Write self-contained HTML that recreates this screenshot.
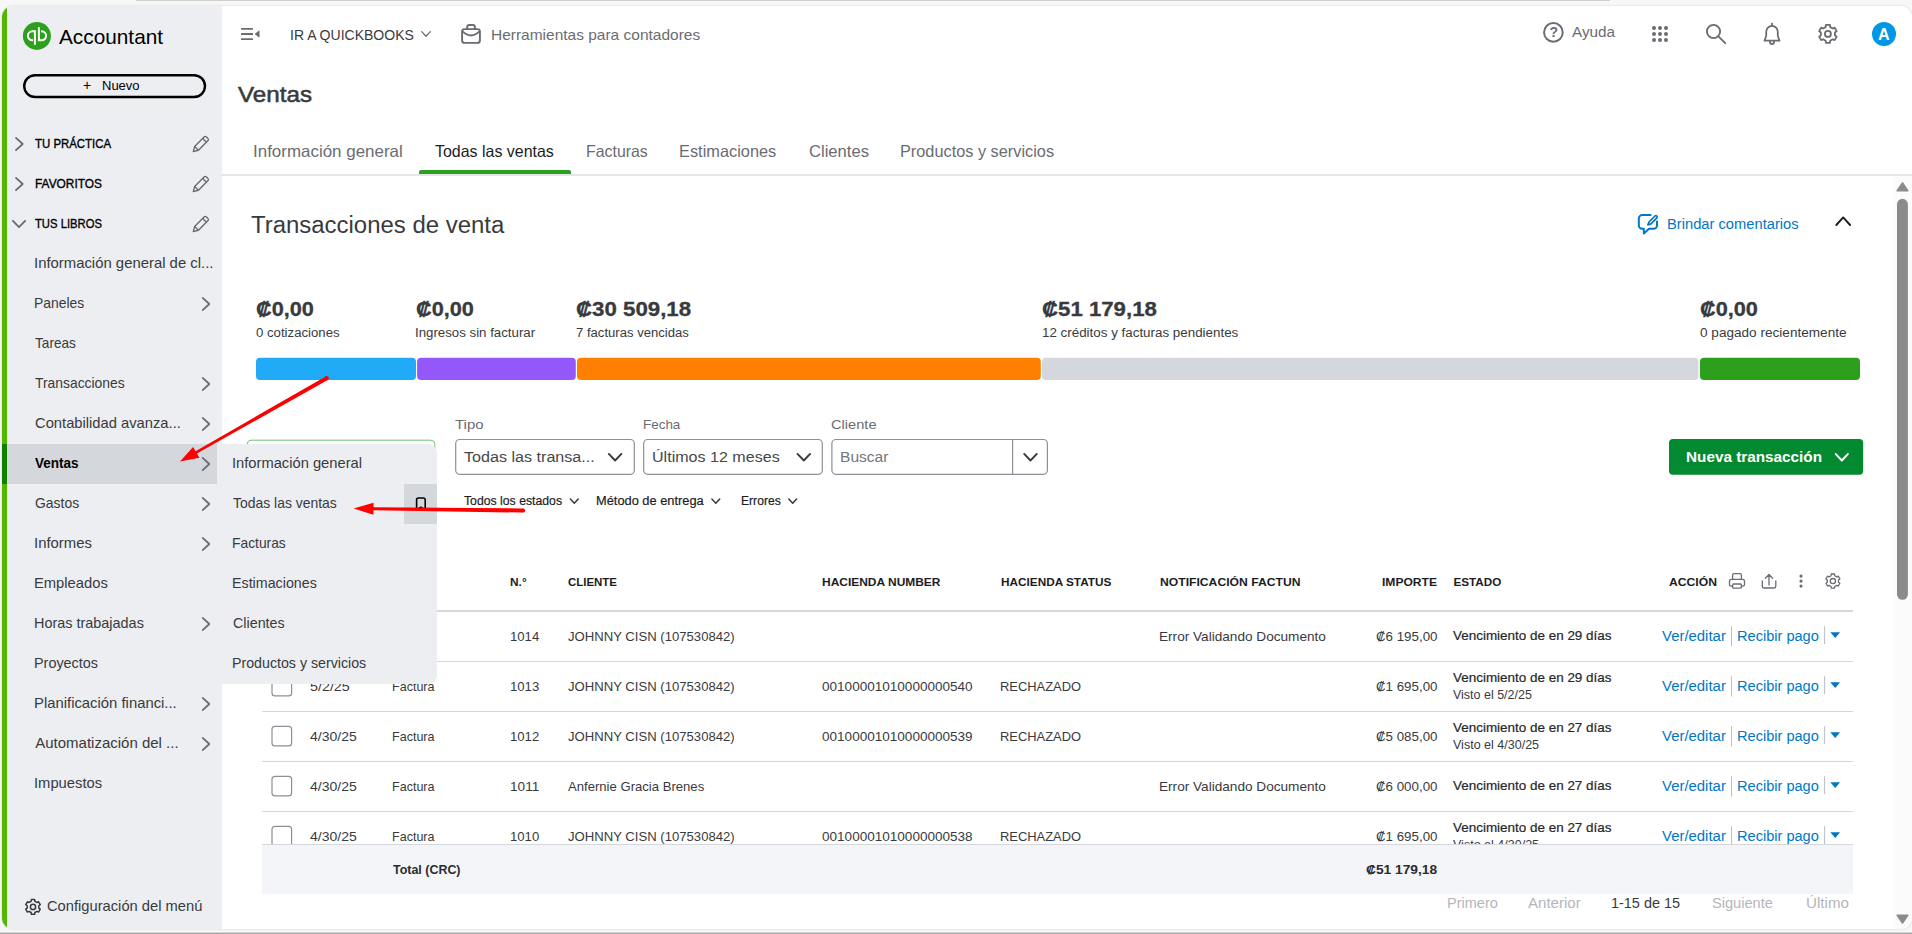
<!DOCTYPE html>
<html lang="es">
<head>
<meta charset="utf-8">
<title>Ventas</title>
<style>
*{box-sizing:border-box;margin:0;padding:0}
html,body{width:1912px;height:934px;overflow:hidden}
body{background:#f7f7f7;font-family:"Liberation Sans",sans-serif;color:#393a3d;position:relative}
.abs{position:absolute}
.t{position:absolute;white-space:nowrap;line-height:20px;height:20px;transform-origin:0 50%}
svg{position:absolute;overflow:visible}
#topline{left:136px;top:0;width:1474px;height:1px;background:#cfcfcf}
#bottomline{left:0;top:932px;width:1912px;height:2px;background:linear-gradient(#d6d6d6 0,#d6d6d6 40%,#a6a6a6 40%)}
#win{left:2px;top:6px;width:1910px;height:923px;background:#fff;border-radius:11px;overflow:hidden;box-shadow:0 0 2px rgba(0,0,0,.18)}
/* coordinates inside #win are offset by (-2,-6); use an inner wrapper to restore page coords */
#pg{position:absolute;left:-2px;top:-6px;width:1912px;height:934px}
#greenbar{left:2px;top:6px;width:5px;height:923px;background:#53b700}
#side{left:7px;top:6px;width:215px;height:923px;background:#eceef1}
#selrow{left:2px;top:444px;width:215px;height:40px;background:#d4d7dc}
#selgreen{left:2px;top:444px;width:5px;height:40px;background:#108000}
#fly{left:217px;top:444px;width:220px;height:240px;background:#eceef1;border-radius:0 9px 9px 0}
#bm{left:404px;top:484px;width:33px;height:40px;background:#d4d7dc}
</style>
</head>
<body>
<div class="abs" id="topline"></div>
<div class="abs" id="bottomline"></div>
<div class="abs" id="win"><div id="pg">

<!-- ============ SIDEBAR ============ -->
<aside>
<div class="abs" id="greenbar"></div>
<div class="abs" id="side"></div>
<nav>
<div class="abs" id="selrow"></div><div class="abs" id="selgreen"></div>
<svg width="1912" height="934" style="left:0;top:0"><circle cx="36.9" cy="35.9" r="14" fill="#2ca01c"/><path d="M33 40.3 H32.4 A4.5 4.5 0 0 1 32.4 31.3 H34.9 V44.7" fill="none" stroke="#fff" stroke-width="2"/><path d="M41 31.3 H41.6 A4.5 4.5 0 0 1 41.6 40.3 H38.9 V27.3" fill="none" stroke="#fff" stroke-width="2"/><rect x="24.2" y="75.2" width="180.8" height="21.8" rx="10.9" fill="none" stroke="#000" stroke-width="2.4"/><path d="M16.0 137.9 L22.7 144.0 L16.0 150.1" fill="none" stroke="#6b6c72" stroke-width="1.8" stroke-linecap="round" stroke-linejoin="round"/><path d="M16.0 177.9 L22.7 184.0 L16.0 190.1" fill="none" stroke="#6b6c72" stroke-width="1.8" stroke-linecap="round" stroke-linejoin="round"/><path d="M12.9 220.8 L19.0 227.2 L25.1 220.8" fill="none" stroke="#6b6c72" stroke-width="1.8" stroke-linecap="round" stroke-linejoin="round"/><path d="M193.30 151.60 L194.68 146.47 L204.30 136.86 A1.4 1.4 0 0 1 206.28 136.86 L208.04 138.62 A1.4 1.4 0 0 1 208.04 140.60 L198.43 150.22 Z M194.68 146.47 L198.43 150.22 M202.67 138.48 L206.42 142.23" fill="none" stroke="#6b6c72" stroke-width="1.4" stroke-linejoin="round" stroke-linecap="round"/><path d="M193.30 191.60 L194.68 186.47 L204.30 176.86 A1.4 1.4 0 0 1 206.28 176.86 L208.04 178.62 A1.4 1.4 0 0 1 208.04 180.60 L198.43 190.22 Z M194.68 186.47 L198.43 190.22 M202.67 178.48 L206.42 182.23" fill="none" stroke="#6b6c72" stroke-width="1.4" stroke-linejoin="round" stroke-linecap="round"/><path d="M193.30 231.60 L194.68 226.47 L204.30 216.86 A1.4 1.4 0 0 1 206.28 216.86 L208.04 218.62 A1.4 1.4 0 0 1 208.04 220.60 L198.43 230.22 Z M194.68 226.47 L198.43 230.22 M202.67 218.48 L206.42 222.23" fill="none" stroke="#6b6c72" stroke-width="1.4" stroke-linejoin="round" stroke-linecap="round"/><path d="M202.7 297.9 L209.3 304.0 L202.7 310.1" fill="none" stroke="#6b6c72" stroke-width="1.8" stroke-linecap="round" stroke-linejoin="round"/><path d="M202.7 377.9 L209.3 384.0 L202.7 390.1" fill="none" stroke="#6b6c72" stroke-width="1.8" stroke-linecap="round" stroke-linejoin="round"/><path d="M202.7 417.9 L209.3 424.0 L202.7 430.1" fill="none" stroke="#6b6c72" stroke-width="1.8" stroke-linecap="round" stroke-linejoin="round"/><path d="M202.7 457.9 L209.3 464.0 L202.7 470.1" fill="none" stroke="#6b6c72" stroke-width="1.8" stroke-linecap="round" stroke-linejoin="round"/><path d="M202.7 497.9 L209.3 504.0 L202.7 510.1" fill="none" stroke="#6b6c72" stroke-width="1.8" stroke-linecap="round" stroke-linejoin="round"/><path d="M202.7 537.9 L209.3 544.0 L202.7 550.1" fill="none" stroke="#6b6c72" stroke-width="1.8" stroke-linecap="round" stroke-linejoin="round"/><path d="M202.7 617.9 L209.3 624.0 L202.7 630.1" fill="none" stroke="#6b6c72" stroke-width="1.8" stroke-linecap="round" stroke-linejoin="round"/><path d="M202.7 697.9 L209.3 704.0 L202.7 710.1" fill="none" stroke="#6b6c72" stroke-width="1.8" stroke-linecap="round" stroke-linejoin="round"/><path d="M202.7 737.9 L209.3 744.0 L202.7 750.1" fill="none" stroke="#6b6c72" stroke-width="1.8" stroke-linecap="round" stroke-linejoin="round"/><path d="M31.34 899.48 L34.66 899.48 L34.89 901.28 L36.92 902.45 L38.59 901.76 L40.25 904.63 L38.81 905.73 L38.81 908.07 L40.25 909.17 L38.59 912.04 L36.92 911.35 L34.89 912.52 L34.66 914.32 L31.34 914.32 L31.11 912.52 L29.08 911.35 L27.41 912.04 L25.75 909.17 L27.19 908.07 L27.19 905.73 L25.75 904.63 L27.41 901.76 L29.08 902.45 L31.11 901.28 Z" fill="none" stroke="#393a3d" stroke-width="1.5" stroke-linejoin="round"/><circle cx="33" cy="906.9" r="2.6" fill="none" stroke="#393a3d" stroke-width="1.5"/></svg>
<span class="t" style="left:59.40px;top:26.50px;font-size:21px;color:#000;transform:scaleX(0.9901);">Accountant</span>
<span class="t" style="left:83.00px;top:75.31px;font-size:14px;color:#000;">+</span>
<span class="t" style="left:102.00px;top:76.00px;font-size:13px;color:#000;">Nuevo</span>
<span class="t" style="left:35.00px;top:134.10px;font-size:13px;color:#000;transform:scaleX(0.8782);-webkit-text-stroke:.35px #000;">TU PRÁCTICA</span>
<span class="t" style="left:34.58px;top:174.10px;font-size:13px;color:#000;transform:scaleX(0.9155);-webkit-text-stroke:.35px #000;">FAVORITOS</span>
<span class="t" style="left:35.00px;top:214.10px;font-size:13px;color:#000;transform:scaleX(0.8657);-webkit-text-stroke:.35px #000;">TUS LIBROS</span>
<span class="t" style="left:34.21px;top:253.11px;font-size:15px;transform:scaleX(0.9918);">Información general de cl...</span>
<span class="t" style="left:34.27px;top:293.11px;font-size:15px;transform:scaleX(0.9259);">Paneles</span>
<span class="t" style="left:35.20px;top:333.11px;font-size:15px;transform:scaleX(0.9074);">Tareas</span>
<span class="t" style="left:35.20px;top:373.11px;font-size:15px;transform:scaleX(0.9245);">Transacciones</span>
<span class="t" style="left:35.20px;top:413.11px;font-size:15px;transform:scaleX(0.9826);">Contabilidad avanza...</span>
<span class="t" style="left:35.20px;top:453.11px;font-size:15px;font-weight:700;color:#000;transform:scaleX(0.8996);">Ventas</span>
<span class="t" style="left:35.20px;top:493.11px;font-size:15px;transform:scaleX(0.9294);">Gastos</span>
<span class="t" style="left:34.21px;top:533.11px;font-size:15px;transform:scaleX(0.9920);">Informes</span>
<span class="t" style="left:34.22px;top:573.11px;font-size:15px;transform:scaleX(0.9831);">Empleados</span>
<span class="t" style="left:34.24px;top:613.11px;font-size:15px;transform:scaleX(0.9616);">Horas trabajadas</span>
<span class="t" style="left:34.24px;top:653.11px;font-size:15px;transform:scaleX(0.9587);">Proyectos</span>
<span class="t" style="left:34.21px;top:693.11px;font-size:15px;transform:scaleX(0.9896);">Planificación financi...</span>
<span class="t" style="left:35.20px;top:733.11px;font-size:15px;">Automatización del ...</span>
<span class="t" style="left:34.22px;top:773.11px;font-size:15px;transform:scaleX(0.9838);">Impuestos</span>
<span class="t" style="left:47.00px;top:896.20px;font-size:15px;transform:scaleX(0.9805);">Configuración del menú</span>
</nav>
</aside>

<!-- ============ TOPBAR ============ -->
<header>
<svg width="1912" height="934" style="left:0;top:0"><rect x="241" y="27.95" width="12" height="1.9" rx=".5" fill="#6b6c72"/><rect x="241" y="33.05" width="12" height="1.9" rx=".5" fill="#6b6c72"/><rect x="241" y="38.15" width="12" height="1.9" rx=".5" fill="#6b6c72"/><path d="M255 34 L259.2 30.8 V37.2 Z" fill="#6b6c72" stroke="#6b6c72" stroke-width=".6" stroke-linejoin="round"/><path d="M421.7 31.6 L426.0 36.2 L430.3 31.6" fill="none" stroke="#6b6c72" stroke-width="1.3" stroke-linecap="round" stroke-linejoin="round"/><g fill="none" stroke="#6b6c72" stroke-width="1.9" stroke-linejoin="round" stroke-linecap="round"><rect x="462.1" y="29.1" width="17.8" height="13.8" rx="2.4"/><path d="M467.2 28.6 V27 a2 2 0 0 1 2 -2 h3.7 a2 2 0 0 1 2 2 V28.6"/><path d="M462.6 31.4 Q471 39.6 479.4 31.4" stroke-width="1.7"/></g><circle cx="1553.4" cy="32.4" r="9.35" fill="none" stroke="#6b6c72" stroke-width="1.95"/><circle cx="1654" cy="28" r="2" fill="#6b6c72"/><circle cx="1654" cy="34" r="2" fill="#6b6c72"/><circle cx="1654" cy="40" r="2" fill="#6b6c72"/><circle cx="1660" cy="28" r="2" fill="#6b6c72"/><circle cx="1660" cy="34" r="2" fill="#6b6c72"/><circle cx="1660" cy="40" r="2" fill="#6b6c72"/><circle cx="1666" cy="28" r="2" fill="#6b6c72"/><circle cx="1666" cy="34" r="2" fill="#6b6c72"/><circle cx="1666" cy="40" r="2" fill="#6b6c72"/><circle cx="1713.5" cy="31.5" r="6.6" fill="none" stroke="#6b6c72" stroke-width="1.9"/><path d="M1718.4 36.4 L1725.2 43.2" stroke="#6b6c72" stroke-width="1.9" stroke-linecap="round"/><g fill="none" stroke="#6b6c72" stroke-width="1.8" stroke-linejoin="round" stroke-linecap="round"><path d="M1772 23.6 V25.6"/><path d="M1764.5 40.7 L1766.2 36 V32 A5.8 6.2 0 0 1 1777.8 32 V36 L1779.5 40.7 Z"/><path d="M1769.9 41.6 A2.1 2.6 0 0 0 1774.1 41.6"/></g><path d="M1825.89 24.92 L1829.91 24.92 L1830.19 27.10 L1832.65 28.52 L1834.67 27.67 L1836.68 31.15 L1834.93 32.48 L1834.93 35.32 L1836.68 36.65 L1834.67 40.13 L1832.65 39.28 L1830.19 40.70 L1829.91 42.88 L1825.89 42.88 L1825.61 40.70 L1823.15 39.28 L1821.13 40.13 L1819.12 36.65 L1820.87 35.32 L1820.87 32.48 L1819.12 31.15 L1821.13 27.67 L1823.15 28.52 L1825.61 27.10 Z" fill="none" stroke="#6b6c72" stroke-width="1.8" stroke-linejoin="round"/><circle cx="1827.9" cy="33.9" r="3.0" fill="none" stroke="#6b6c72" stroke-width="1.8"/><circle cx="1884" cy="33.9" r="12" fill="#0097e6"/><rect x="222" y="174" width="1690" height="2" fill="#e3e5e8"/><path d="M419 174 V172 a2 2 0 0 1 2 -2 H569 a2 2 0 0 1 2 2 V174 Z" fill="#2ca01c"/></svg>
<span class="t" style="left:289.53px;top:25.01px;font-size:14.5px;transform:scaleX(0.9668);">IR A QUICKBOOKS</span>
<span class="t" style="left:490.57px;top:24.81px;font-size:15px;color:#6b6c72;transform:scaleX(1.0323);">Herramientas para contadores</span>
<span class="t" style="left:1549.60px;top:22.40px;font-size:14px;font-weight:700;color:#6b6c72;">?</span>
<span class="t" style="left:1571.80px;top:21.81px;font-size:15.5px;color:#6b6c72;transform:scaleX(0.9853);">Ayuda</span>
<span class="t" style="left:1877.90px;top:24.90px;font-size:16px;font-weight:700;color:#fff;transform:scaleX(1.0083);">A</span>
<span class="t" style="left:238.40px;top:84.40px;font-size:22.8px;transform:scaleX(1.0618);-webkit-text-stroke:.55px #393a3d;">Ventas</span>
<span class="t" style="left:252.97px;top:140.91px;font-size:16.5px;color:#6b6c72;transform:scaleX(1.0266);">Información general</span>
<span class="t" style="left:435.30px;top:140.91px;font-size:16.5px;color:#1d1d1f;transform:scaleX(0.9669);">Todas las ventas</span>
<span class="t" style="left:586.24px;top:140.91px;font-size:16.5px;color:#6b6c72;transform:scaleX(0.9629);">Facturas</span>
<span class="t" style="left:679.41px;top:140.91px;font-size:16.5px;color:#6b6c72;transform:scaleX(0.9910);">Estimaciones</span>
<span class="t" style="left:809.30px;top:140.91px;font-size:16.5px;color:#6b6c72;transform:scaleX(1.0057);">Clientes</span>
<span class="t" style="left:900.41px;top:140.91px;font-size:16.5px;color:#6b6c72;transform:scaleX(0.9881);">Productos y servicios</span>
</header>

<!-- ============ MAIN ============ -->
<main>
<svg width="1912" height="934" style="left:0;top:0"><rect x="1893" y="176" width="19" height="753" fill="#fbfbfb"/><path d="M1897.2 190.8 L1902.5 183 L1907.8 190.8 Z" fill="#8b8b8b" stroke="#8b8b8b" stroke-width="1.6" stroke-linejoin="round"/><path d="M1897.2 915.2 L1902.5 923 L1907.8 915.2 Z" fill="#8b8b8b" stroke="#8b8b8b" stroke-width="1.6" stroke-linejoin="round"/><rect x="1897" y="198.8" width="10.9" height="401" rx="5.45" fill="#8b8b8b"/><g fill="none" stroke="#0077c5" stroke-width="2" stroke-linecap="round" stroke-linejoin="round"><path d="M1650.6 215.1 H1642.3 a3.5 3.5 0 0 0 -3.5 3.5 V225.2 a3.5 3.5 0 0 0 3.5 3.5 H1643.8 V233.4 L1649 228.7 H1653.5 a3.5 3.5 0 0 0 3.5 -3.5 V221.4"/><path d="M1647.9 224.9 L1649 222 L1655 216 A1.35 1.35 0 0 1 1656.9 217.9 L1650.9 223.9 Z" stroke-width="1.7"/></g><path d="M1836.3 225 L1843.2 217.4 L1850.1 225" fill="none" stroke="#1d1d1f" stroke-width="1.9" stroke-linecap="round" stroke-linejoin="round"/><rect x="256" y="357.8" width="160.0" height="22.2" rx="4" fill="#21abf6"/><rect x="417.1" y="357.8" width="158.7" height="22.2" rx="4" fill="#9457fa"/><rect x="577" y="357.8" width="463.8" height="22.2" rx="4" fill="#ff8000"/><rect x="1042" y="357.8" width="656.4" height="22.2" rx="4" fill="#d4d7dc"/><rect x="1700" y="357.8" width="160.0" height="22.2" rx="4" fill="#2ca01c"/><rect x="247.2" y="440.2" width="187.6" height="35" rx="4" fill="#fff" stroke="#6cc17c" stroke-width="1"/><rect x="455.70000000000005" y="439.5" width="178.6" height="34.8" rx="4" fill="#fff" stroke="#8d9096" stroke-width="1.2"/><rect x="643.7" y="439.5" width="178.6" height="34.8" rx="4" fill="#fff" stroke="#8d9096" stroke-width="1.2"/><rect x="831.9" y="439.5" width="215.5" height="34.8" rx="4" fill="#fff" stroke="#8d9096" stroke-width="1.2"/><path d="M1012.6 439.5 V474.3" stroke="#8d9096" stroke-width="1.2"/><path d="M608.8 453.9 L615.1 460.5 L621.4 453.9" fill="none" stroke="#393a3d" stroke-width="1.9" stroke-linecap="round" stroke-linejoin="round"/><path d="M797.5 453.9 L803.8 460.5 L810.1 453.9" fill="none" stroke="#393a3d" stroke-width="1.9" stroke-linecap="round" stroke-linejoin="round"/><path d="M1024.2 453.9 L1030.5 460.5 L1036.8 453.9" fill="none" stroke="#393a3d" stroke-width="1.9" stroke-linecap="round" stroke-linejoin="round"/><path d="M570.4 499.1 L574.3 503.3 L578.2 499.1" fill="none" stroke="#393a3d" stroke-width="1.5" stroke-linecap="round" stroke-linejoin="round"/><path d="M711.9 499.1 L715.8 503.3 L719.7 499.1" fill="none" stroke="#393a3d" stroke-width="1.5" stroke-linecap="round" stroke-linejoin="round"/><path d="M788.8 499.1 L792.7 503.3 L796.6 499.1" fill="none" stroke="#393a3d" stroke-width="1.5" stroke-linecap="round" stroke-linejoin="round"/><rect x="1669" y="439" width="194.2" height="35.8" rx="4" fill="#038a30"/><path d="M1835.8 454.1 L1841.8 460.5 L1847.8 454.1" fill="none" stroke="#fff" stroke-width="2" stroke-linecap="round" stroke-linejoin="round"/><g fill="none" stroke="#6b6c72" stroke-width="1.3" stroke-linejoin="round" stroke-linecap="round"><path d="M1732.6 579.4 V575 a1.4 1.4 0 0 1 1.4 -1.4 h6 a1.4 1.4 0 0 1 1.4 1.4 V579.4"/><path d="M1732.6 586.2 H1731.3 a1.8 1.8 0 0 1 -1.8 -1.8 V581.2 a1.8 1.8 0 0 1 1.8 -1.8 H1742.7 a1.8 1.8 0 0 1 1.8 1.8 V584.4 a1.8 1.8 0 0 1 -1.8 1.8 H1741.4"/><rect x="1732.6" y="584" width="8.8" height="4.2" rx="1"/><path d="M1762.3 581 V586.2 a1.8 1.8 0 0 0 1.8 1.8 H1774 a1.8 1.8 0 0 0 1.8 -1.8 V581"/><path d="M1769 585 V574.6 M1765.4 578.2 L1769 574.5 L1772.6 578.2"/></g><circle cx="1801" cy="576.1" r="1.55" fill="#6b6c72"/><circle cx="1801" cy="581.1" r="1.55" fill="#6b6c72"/><circle cx="1801" cy="586.1" r="1.55" fill="#6b6c72"/><path d="M1831.31 573.98 L1834.49 573.98 L1834.72 575.70 L1836.67 576.83 L1838.27 576.16 L1839.87 578.92 L1838.48 579.97 L1838.48 582.23 L1839.87 583.28 L1838.27 586.04 L1836.67 585.37 L1834.72 586.50 L1834.49 588.22 L1831.31 588.22 L1831.08 586.50 L1829.13 585.37 L1827.53 586.04 L1825.93 583.28 L1827.32 582.23 L1827.32 579.97 L1825.93 578.92 L1827.53 576.16 L1829.13 576.83 L1831.08 575.70 Z" fill="none" stroke="#6b6c72" stroke-width="1.3" stroke-linejoin="round"/><circle cx="1832.9" cy="581.1" r="2.6" fill="none" stroke="#6b6c72" stroke-width="1.3"/><rect x="262" y="610" width="1591" height="2" fill="#d4d7dc"/><rect x="262" y="661" width="1591" height="1" fill="#d4d7dc"/><rect x="262" y="711" width="1591" height="1" fill="#d4d7dc"/><rect x="262" y="761" width="1591" height="1" fill="#d4d7dc"/><rect x="262" y="811" width="1591" height="1" fill="#d4d7dc"/><rect x="272" y="626.3" width="19.6" height="19.6" rx="3" fill="#fff" stroke="#8d9096" stroke-width="1.2"/><rect x="272" y="676.3" width="19.6" height="19.6" rx="3" fill="#fff" stroke="#8d9096" stroke-width="1.2"/><rect x="272" y="726.3" width="19.6" height="19.6" rx="3" fill="#fff" stroke="#8d9096" stroke-width="1.2"/><rect x="272" y="776.3" width="19.6" height="19.6" rx="3" fill="#fff" stroke="#8d9096" stroke-width="1.2"/><rect x="272" y="826.3" width="19.6" height="19.6" rx="3" fill="#fff" stroke="#8d9096" stroke-width="1.2"/><path d="M1731.5 626.3 V646.5 M1824.6 626.3 V644" stroke="#babec5" stroke-width="1"/><path d="M1830.3 632.3 H1840.1 L1835.2 638.1 Z" fill="#0077c5"/><path d="M1731.5 676.3 V696.5 M1824.6 676.3 V694" stroke="#babec5" stroke-width="1"/><path d="M1830.3 682.3 H1840.1 L1835.2 688.1 Z" fill="#0077c5"/><path d="M1731.5 726.3 V746.5 M1824.6 726.3 V744" stroke="#babec5" stroke-width="1"/><path d="M1830.3 732.3 H1840.1 L1835.2 738.1 Z" fill="#0077c5"/><path d="M1731.5 776.3 V796.5 M1824.6 776.3 V794" stroke="#babec5" stroke-width="1"/><path d="M1830.3 782.3 H1840.1 L1835.2 788.1 Z" fill="#0077c5"/><path d="M1731.5 826.3 V846.5 M1824.6 826.3 V844" stroke="#babec5" stroke-width="1"/><path d="M1830.3 832.3 H1840.1 L1835.2 838.1 Z" fill="#0077c5"/><rect x="262" y="844.4" width="1591" height="49.2" fill="#f4f5f8"/><rect x="262" y="844" width="1591" height="1" fill="#d4d7dc"/></svg>
<span class="t" style="left:251.20px;top:214.50px;font-size:23.5px;transform:scaleX(1.0186);">Transacciones de venta</span>
<span class="t" style="left:1666.55px;top:213.81px;font-size:14px;color:#0077c5;transform:scaleX(1.0509);">Brindar comentarios</span>
<span class="t" style="left:255.70px;top:299.20px;font-size:20px;font-weight:700;transform:scaleX(1.0855);-webkit-text-stroke:.3px #393a3d;">₡0,00</span>
<span class="t" style="left:415.70px;top:299.20px;font-size:20px;font-weight:700;transform:scaleX(1.0855);-webkit-text-stroke:.3px #393a3d;">₡0,00</span>
<span class="t" style="left:576.20px;top:299.20px;font-size:20px;font-weight:700;transform:scaleX(1.1133);-webkit-text-stroke:.3px #393a3d;">₡30 509,18</span>
<span class="t" style="left:1042.00px;top:299.20px;font-size:20px;font-weight:700;transform:scaleX(1.1104);-webkit-text-stroke:.3px #393a3d;">₡51 179,18</span>
<span class="t" style="left:1699.80px;top:299.20px;font-size:20px;font-weight:700;transform:scaleX(1.0855);-webkit-text-stroke:.3px #393a3d;">₡0,00</span>
<span class="t" style="left:255.70px;top:322.60px;font-size:12px;transform:scaleX(1.0994);">0 cotizaciones</span>
<span class="t" style="left:414.60px;top:322.60px;font-size:12px;transform:scaleX(1.1047);">Ingresos sin facturar</span>
<span class="t" style="left:576.20px;top:322.60px;font-size:12px;transform:scaleX(1.0910);">7 facturas vencidas</span>
<span class="t" style="left:1042.00px;top:322.60px;font-size:12px;transform:scaleX(1.1147);">12 créditos y facturas pendientes</span>
<span class="t" style="left:1699.80px;top:322.60px;font-size:12px;transform:scaleX(1.1321);">0 pagado recientemente</span>
<span class="t" style="left:455.30px;top:414.81px;font-size:13.5px;color:#6b6c72;transform:scaleX(1.1088);">Tipo</span>
<span class="t" style="left:642.51px;top:414.81px;font-size:13.5px;color:#6b6c72;transform:scaleX(0.9943);">Fecha</span>
<span class="t" style="left:831.30px;top:414.81px;font-size:13.5px;color:#6b6c72;transform:scaleX(1.0840);">Cliente</span>
<span class="t" style="left:464.20px;top:446.91px;font-size:15.5px;color:#45474b;transform:scaleX(1.0395);">Todas las transa...</span>
<span class="t" style="left:652.16px;top:446.91px;font-size:15.5px;color:#45474b;transform:scaleX(1.0366);">Últimos 12 meses</span>
<span class="t" style="left:839.50px;top:446.91px;font-size:15.5px;color:#74767c;transform:scaleX(1.0047);">Buscar</span>
<span class="t" style="left:262.00px;top:447.01px;font-size:15px;color:#2ca01c;">Acciones por lote</span>
<span class="t" style="left:1685.78px;top:447.31px;font-size:15px;font-weight:700;color:#fff;transform:scaleX(1.0195);">Nueva transacción</span>
<span class="t" style="left:464.20px;top:490.91px;font-size:12.5px;color:#1d1d1f;transform:scaleX(0.9799);-webkit-text-stroke:.2px #1d1d1f;">Todos los estados</span>
<span class="t" style="left:595.57px;top:490.91px;font-size:12.5px;color:#1d1d1f;transform:scaleX(1.0261);-webkit-text-stroke:.2px #1d1d1f;">Método de entrega</span>
<span class="t" style="left:740.63px;top:490.91px;font-size:12.5px;color:#1d1d1f;transform:scaleX(0.9691);-webkit-text-stroke:.2px #1d1d1f;">Errores</span>
<span class="t" style="left:510.40px;top:571.71px;font-size:11.7px;font-weight:700;color:#1d1d1f;transform:scaleX(1.0187);">N.°</span>
<span class="t" style="left:567.60px;top:571.71px;font-size:11.7px;font-weight:700;color:#1d1d1f;transform:scaleX(0.9781);">CLIENTE</span>
<span class="t" style="left:821.70px;top:571.71px;font-size:11.7px;font-weight:700;color:#1d1d1f;transform:scaleX(1.0233);">HACIENDA NUMBER</span>
<span class="t" style="left:1001.10px;top:571.71px;font-size:11.7px;font-weight:700;color:#1d1d1f;transform:scaleX(1.0077);">HACIENDA STATUS</span>
<span class="t" style="left:1159.60px;top:571.71px;font-size:11.7px;font-weight:700;color:#1d1d1f;transform:scaleX(1.0401);">NOTIFICACIÓN FACTUN</span>
<span class="t" style="left:1382.00px;top:571.71px;font-size:11.7px;font-weight:700;color:#1d1d1f;transform:scaleX(1.0328);">IMPORTE</span>
<span class="t" style="left:1453.40px;top:571.71px;font-size:11.7px;font-weight:700;color:#1d1d1f;">ESTADO</span>
<span class="t" style="left:1668.70px;top:571.71px;font-size:11.7px;font-weight:700;color:#1d1d1f;transform:scaleX(1.0403);">ACCIÓN</span>
<span class="t" style="left:310.20px;top:626.60px;font-size:13px;transform:scaleX(1.0999);">5/2/25</span>
<span class="t" style="left:391.64px;top:626.60px;font-size:13px;transform:scaleX(0.9648);">Factura</span>
<span class="t" style="left:510.40px;top:626.60px;font-size:13px;transform:scaleX(1.0108);">1014</span>
<span class="t" style="left:567.60px;top:626.60px;font-size:13px;transform:scaleX(1.0089);">JOHNNY CISN (107530842)</span>
<span class="t" style="left:1158.55px;top:626.60px;font-size:13px;transform:scaleX(1.0466);">Error Validando Documento</span>
<span class="t" style="left:1376.00px;top:626.60px;font-size:13px;transform:scaleX(1.0241);">₡6 195,00</span>
<span class="t" style="left:1453.40px;top:626.40px;font-size:13px;color:#26272a;transform:scaleX(1.0344);-webkit-text-stroke:.2px #26272a;">Vencimiento de en 29 días</span>
<span class="t" style="left:1661.90px;top:625.81px;font-size:14px;color:#0077c5;transform:scaleX(1.0654);">Ver/editar</span>
<span class="t" style="left:1736.56px;top:625.81px;font-size:14px;color:#0077c5;transform:scaleX(1.0410);">Recibir pago</span>
<span class="t" style="left:310.20px;top:676.60px;font-size:13px;transform:scaleX(1.0999);">5/2/25</span>
<span class="t" style="left:391.64px;top:676.60px;font-size:13px;transform:scaleX(0.9648);">Factura</span>
<span class="t" style="left:510.40px;top:676.60px;font-size:13px;transform:scaleX(1.0108);">1013</span>
<span class="t" style="left:567.60px;top:676.60px;font-size:13px;transform:scaleX(1.0089);">JOHNNY CISN (107530842)</span>
<span class="t" style="left:821.70px;top:676.60px;font-size:13px;transform:scaleX(1.0418);">00100001010000000540</span>
<span class="t" style="left:1000.11px;top:676.60px;font-size:13px;transform:scaleX(0.9937);">RECHAZADO</span>
<span class="t" style="left:1376.00px;top:676.60px;font-size:13px;transform:scaleX(1.0241);">₡1 695,00</span>
<span class="t" style="left:1453.40px;top:668.10px;font-size:13px;color:#26272a;transform:scaleX(1.0344);-webkit-text-stroke:.2px #26272a;">Vencimiento de en 29 días</span>
<span class="t" style="left:1453.40px;top:684.80px;font-size:12.4px;transform:scaleX(1.0075);">Visto el 5/2/25</span>
<span class="t" style="left:1661.90px;top:675.81px;font-size:14px;color:#0077c5;transform:scaleX(1.0654);">Ver/editar</span>
<span class="t" style="left:1736.56px;top:675.81px;font-size:14px;color:#0077c5;transform:scaleX(1.0410);">Recibir pago</span>
<span class="t" style="left:310.20px;top:726.60px;font-size:13px;transform:scaleX(1.0778);">4/30/25</span>
<span class="t" style="left:391.64px;top:726.60px;font-size:13px;transform:scaleX(0.9648);">Factura</span>
<span class="t" style="left:510.40px;top:726.60px;font-size:13px;transform:scaleX(1.0108);">1012</span>
<span class="t" style="left:567.60px;top:726.60px;font-size:13px;transform:scaleX(1.0089);">JOHNNY CISN (107530842)</span>
<span class="t" style="left:821.70px;top:726.60px;font-size:13px;transform:scaleX(1.0418);">00100001010000000539</span>
<span class="t" style="left:1000.11px;top:726.60px;font-size:13px;transform:scaleX(0.9937);">RECHAZADO</span>
<span class="t" style="left:1376.00px;top:726.60px;font-size:13px;transform:scaleX(1.0241);">₡5 085,00</span>
<span class="t" style="left:1453.40px;top:718.10px;font-size:13px;color:#26272a;transform:scaleX(1.0344);-webkit-text-stroke:.2px #26272a;">Vencimiento de en 27 días</span>
<span class="t" style="left:1453.40px;top:734.80px;font-size:12.4px;transform:scaleX(1.0105);">Visto el 4/30/25</span>
<span class="t" style="left:1661.90px;top:725.81px;font-size:14px;color:#0077c5;transform:scaleX(1.0654);">Ver/editar</span>
<span class="t" style="left:1736.56px;top:725.81px;font-size:14px;color:#0077c5;transform:scaleX(1.0410);">Recibir pago</span>
<span class="t" style="left:310.20px;top:776.60px;font-size:13px;transform:scaleX(1.0778);">4/30/25</span>
<span class="t" style="left:391.64px;top:776.60px;font-size:13px;transform:scaleX(0.9648);">Factura</span>
<span class="t" style="left:510.40px;top:776.60px;font-size:13px;transform:scaleX(1.0460);">1011</span>
<span class="t" style="left:567.60px;top:776.60px;font-size:13px;transform:scaleX(1.0079);">Anfernie Gracia Brenes</span>
<span class="t" style="left:1158.55px;top:776.60px;font-size:13px;transform:scaleX(1.0466);">Error Validando Documento</span>
<span class="t" style="left:1376.00px;top:776.60px;font-size:13px;transform:scaleX(1.0241);">₡6 000,00</span>
<span class="t" style="left:1453.40px;top:776.40px;font-size:13px;color:#26272a;transform:scaleX(1.0344);-webkit-text-stroke:.2px #26272a;">Vencimiento de en 27 días</span>
<span class="t" style="left:1661.90px;top:775.81px;font-size:14px;color:#0077c5;transform:scaleX(1.0654);">Ver/editar</span>
<span class="t" style="left:1736.56px;top:775.81px;font-size:14px;color:#0077c5;transform:scaleX(1.0410);">Recibir pago</span>
<span class="t" style="left:310.20px;top:826.60px;font-size:13px;transform:scaleX(1.0778);">4/30/25</span>
<span class="t" style="left:391.64px;top:826.60px;font-size:13px;transform:scaleX(0.9648);">Factura</span>
<span class="t" style="left:510.40px;top:826.60px;font-size:13px;transform:scaleX(1.0108);">1010</span>
<span class="t" style="left:567.60px;top:826.60px;font-size:13px;transform:scaleX(1.0089);">JOHNNY CISN (107530842)</span>
<span class="t" style="left:821.70px;top:826.60px;font-size:13px;transform:scaleX(1.0418);">00100001010000000538</span>
<span class="t" style="left:1000.11px;top:826.60px;font-size:13px;transform:scaleX(0.9937);">RECHAZADO</span>
<span class="t" style="left:1376.00px;top:826.60px;font-size:13px;transform:scaleX(1.0241);">₡1 695,00</span>
<span class="t" style="left:1453.40px;top:818.10px;font-size:13px;color:#26272a;transform:scaleX(1.0344);-webkit-text-stroke:.2px #26272a;">Vencimiento de en 27 días</span>
<span class="t" style="left:1453.40px;top:834.80px;font-size:12.4px;transform:scaleX(1.0105);">Visto el 4/30/25</span>
<span class="t" style="left:1661.90px;top:825.81px;font-size:14px;color:#0077c5;transform:scaleX(1.0654);">Ver/editar</span>
<span class="t" style="left:1736.56px;top:825.81px;font-size:14px;color:#0077c5;transform:scaleX(1.0410);">Recibir pago</span>
<div class="abs" style="left:262px;top:844px;width:1591px;height:49.6px;background:#f4f5f8;border-top:1px solid #d4d7dc"></div>
<div class="abs" style="left:222px;top:893.6px;width:1671px;height:36px;background:#fff"></div>
<span class="t" style="left:392.60px;top:860.21px;font-size:13px;font-weight:700;color:#2b2c2f;transform:scaleX(0.9574);">Total (CRC)</span>
<span class="t" style="left:1366.30px;top:860.21px;font-size:13px;font-weight:700;color:#2b2c2f;transform:scaleX(1.0583);">₡51 179,18</span>
<span class="t" style="left:1446.86px;top:893.01px;font-size:14px;color:#b4b6bb;transform:scaleX(1.0369);">Primero</span>
<span class="t" style="left:1528.20px;top:893.01px;font-size:14px;color:#b4b6bb;transform:scaleX(1.0738);">Anterior</span>
<span class="t" style="left:1611.27px;top:893.01px;font-size:14px;transform:scaleX(1.0309);">1-15 de 15</span>
<span class="t" style="left:1711.60px;top:893.01px;font-size:14px;color:#b4b6bb;transform:scaleX(1.0428);">Siguiente</span>
<span class="t" style="left:1805.92px;top:893.01px;font-size:14px;color:#b4b6bb;transform:scaleX(1.0827);">Último</span>
</main>

<!-- ============ FLYOUT ============ -->
<nav>
<div class="abs" id="fly"></div><div class="abs" id="bm"></div>
<svg width="1912" height="934" style="left:0;top:0"><path d="M416.6 509.6 V499.8 a1.8 1.8 0 0 1 1.8 -1.8 h5 a1.8 1.8 0 0 1 1.8 1.8 V509.6 L420.9 507.3 Z" fill="none" stroke="#000" stroke-width="1.6" stroke-linejoin="round"/></svg>
<span class="t" style="left:232.32px;top:453.11px;font-size:15px;transform:scaleX(0.9806);">Información general</span>
<span class="t" style="left:233.30px;top:493.11px;font-size:15px;transform:scaleX(0.9287);">Todas las ventas</span>
<span class="t" style="left:232.38px;top:533.11px;font-size:15px;transform:scaleX(0.9217);">Facturas</span>
<span class="t" style="left:232.35px;top:573.11px;font-size:15px;transform:scaleX(0.9510);">Estimaciones</span>
<span class="t" style="left:233.30px;top:613.11px;font-size:15px;transform:scaleX(0.9536);">Clientes</span>
<span class="t" style="left:232.35px;top:653.11px;font-size:15px;transform:scaleX(0.9471);">Productos y servicios</span>
</nav>

<!-- ============ ARROWS ============ -->
<svg width="1912" height="934" style="left:0;top:0"><path d="M325.7 376.4 L195.6 451.2 L193.1 446.9 L180.0 461.6 L199.4 457.8 L196.9 453.5 L327.7 380.0 Z" fill="#ff0000"/><circle cx="326.7" cy="378.2" r="2.1" fill="#ff0000"/><path d="M523.1 508.4 L373.5 507.2 L373.6 502.7 L353.6 508.5 L373.4 514.7 L373.5 510.2 L523.1 512.6 Z" fill="#ff0000"/><circle cx="523.1" cy="510.5" r="2.1" fill="#ff0000"/></svg>

</div></div>
</body>
</html>
